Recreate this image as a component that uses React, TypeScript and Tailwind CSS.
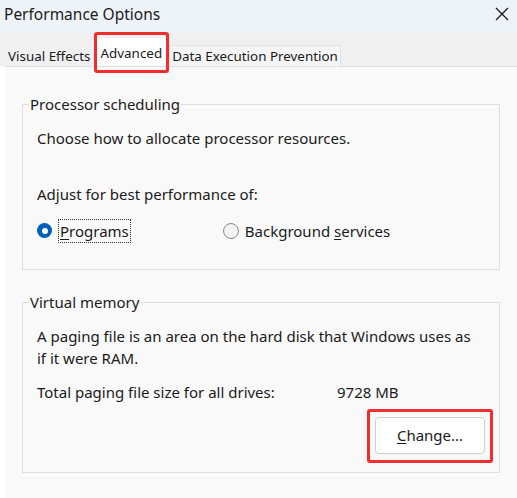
import React from "react";

const font = { fontFamily: '"Noto Sans", "Open Sans", sans-serif' };

function Radio({ checked }: { checked?: boolean }) {
  if (checked) {
    return (
      <span className="flex h-[15px] w-[15px] items-center justify-center rounded-full bg-[#005fb8]">
        <span className="h-[6px] w-[6px] rounded-full bg-white" />
      </span>
    );
  }
  return <span className="h-[16px] w-[16px] rounded-full border border-[#8a8a8a] bg-[#f3f3f3]" />;
}

export default function App() {
  return (
    <div className="flex h-[498px] w-[517px] flex-col bg-white text-[#1b1b1b]" style={font}>
      {/* Title bar */}
      <div className="flex h-[33px] items-start justify-between bg-[#eef2f9] pl-[4px] pr-[7px] pt-[3px]">
        <span className="text-[15.5px]">Performance Options</span>
        <svg width="16" height="16" viewBox="0 0 16 16" className="mt-[3px] text-[#1b1b1b]">
          <path d="M2 2 L14 14 M14 2 L2 14" stroke="currentColor" strokeWidth="1.3" />
        </svg>
      </div>

      {/* Tabs */}
      <div className="flex h-[33px] items-end bg-[#f0f0f0] pl-[6px] text-[13.4px]">
        <div className="flex h-[20px] items-center px-[2px]">Visual Effects</div>
        <div className="relative ml-[4px] flex h-[28px] items-center bg-white px-[4px] pt-[2px]">
          Advanced
          <div className="absolute -bottom-[7px] -left-[3px] -right-[3px] -top-[6px] rounded-[3px] border-[3px] border-[#f22d2d]" />
        </div>
        <div className="ml-[3px] flex h-[21px] items-center border border-b-0 border-[#e2e2e2] bg-[#f5f5f5] px-[2px]">
          Data Execution Prevention
        </div>
      </div>

      {/* Page */}
      <div className="ml-[5px] flex flex-1 flex-col border-t border-[#e0e0e0] bg-[#f9f9f9] px-[17px] pt-[26px] text-[15px]">
        <fieldset className="h-[177px] border border-[#dedede] pl-[6px] pr-[14px]">
          <legend className="px-[1px]">Processor scheduling</legend>
          <div className="ml-[8px] flex flex-col">
            <p className="mt-[11px] leading-[22px]">Choose how to allocate processor resources.</p>
            <p className="mt-[34px] leading-[22px]">Adjust for best performance of:</p>
            <div className="mt-[14px] flex items-center">
              <Radio checked />
              <span className="ml-[6px] border border-dotted border-[#333] px-[1px] leading-[22px]">
                <span className="underline underline-offset-2">P</span>rograms
              </span>
              <span className="ml-[92px] flex items-center">
                <Radio />
                <span className="ml-[6px] leading-[22px]">
                  Background <span className="underline underline-offset-2">s</span>ervices
                </span>
              </span>
            </div>
          </div>
        </fieldset>

        <fieldset className="mt-[21px] h-[182px] border border-[#dedede] pl-[6px] pr-[14px]">
          <legend className="px-[1px]">Virtual memory</legend>
          <div className="ml-[8px] flex flex-col">
            <p className="mt-[11px] leading-[22px]">
              A paging file is an area on the hard disk that Windows uses as
              <br />
              if it were RAM.
            </p>
            <div className="mt-[12px] flex leading-[22px]">
              <span className="w-[300px]">Total paging file size for all drives:</span>
              <span>9728 MB</span>
            </div>
            <div className="mt-[14px] flex justify-end">
              <div className="relative">
                <button className="flex h-[37px] w-[110px] items-center justify-center rounded-[4px] border border-[#d0d0d0] bg-white text-[15px]">
                  <span className="underline underline-offset-2">C</span>hange...
                </button>
                <div className="absolute -bottom-[9px] -left-[8px] -right-[8px] -top-[8px] rounded-[3px] border-[3px] border-[#f22d2d]" />
              </div>
            </div>
          </div>
        </fieldset>
      </div>
    </div>
  );
}
